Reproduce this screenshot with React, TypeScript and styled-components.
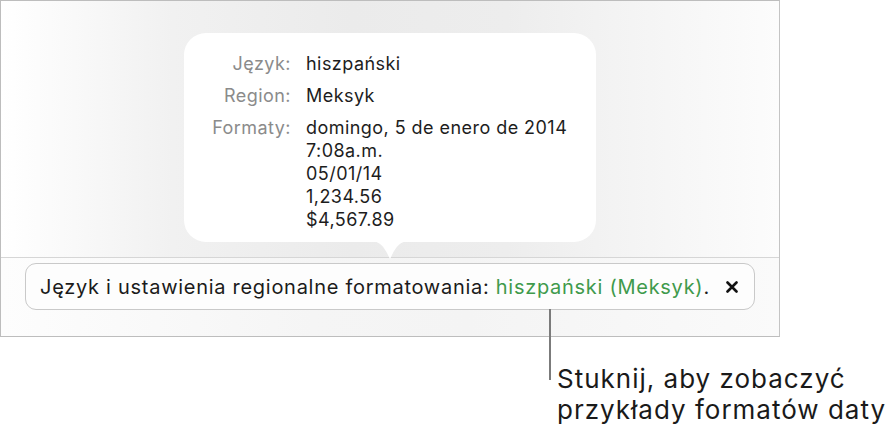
import React from 'react';
import styled, { createGlobalStyle } from 'styled-components';

const GlobalStyle = createGlobalStyle`
  html, body {
    margin: 0;
    padding: 0;
    background: #ffffff;
  }
  body {
    font-family: Inter, "Liberation Sans", Arial, sans-serif;
    -webkit-font-smoothing: antialiased;
  }
`

const Page = styled.div`
  position: relative;
  width: 891px;
  height: 439px;
  overflow: hidden;
`

const Frame = styled.div`
  width: 778px;
  height: 335px;
  border: 1px solid #bdbdbd;
  border-right-color: #c4c4c4;
  display: flex;
  flex-direction: column;
  background: linear-gradient(to right, #ffffff 0%, #f1f1f1 22%, #ebebeb 45%, #ededed 65%, #f7f7f7 88%, #fcfcfc 100%);
`

const Stage = styled.div`
  position: relative;
  height: 256px;
  display: flex;
  justify-content: center;
  padding-top: 32px;
  box-sizing: border-box;
`

const Popover = styled.div`
  position: relative;
  width: 412px;
  height: 209px;
  box-sizing: border-box;
  background: #ffffff;
  border-radius: 22px;
  padding: 19px 0 0 0;
  display: grid;
  grid-template-columns: 107px 1fr;
  column-gap: 15px;
  row-gap: 9px;
  align-content: start;
  font-size: 18px;
  line-height: 23px;
  letter-spacing: 0.45px;
`

const Arrow = styled.svg`
  position: absolute;
  left: 50%;
  bottom: -21px;
  transform: translateX(-50%);
  z-index: 2;
`

const Label = styled.div`
  text-align: right;
  color: #8b8b8b;
`

const Value = styled.div`
  color: #1d1d1d;
`

const Strip = styled.div`
  flex: 1;
  border-top: 1px solid #d6d6d6;
  background: linear-gradient(to right, #fdfdfd 0%, #f5f5f5 40%, #f4f4f4 60%, #fafafa 100%);
  padding: 5px 0 0 24px;
`

const Bar = styled.div`
  width: 730px;
  height: 47px;
  box-sizing: border-box;
  border: 1px solid #c9c9c9;
  border-radius: 11px;
  background: #fdfdfd;
  display: flex;
  align-items: center;
  padding: 0 16px 0 14px;
  font-size: 20px;
  letter-spacing: 0.72px;
  color: #1b1b1b;
  white-space: nowrap;
`

const Highlight = styled.span`
  color: #3f9a4c;
`

const Close = styled.svg`
  margin-left: auto;
  flex: none;
`

const Callout = styled.div`
  position: absolute;
  left: 549px;
  top: 309px;
  display: flex;
  align-items: flex-start;
`

const Leader = styled.div`
  width: 2px;
  height: 71px;
  background: #7b7b7b;
`

const CalloutText = styled.div`
  margin: 54px 0 0 6px;
  font-size: 26px;
  line-height: 31px;
  letter-spacing: 1px;
  color: #1a1a1a;
  white-space: nowrap;
`

const rows: { label: string; values: string[] }[] = [
  { label: 'Język:', values: ['hiszpański'] },
  { label: 'Region:', values: ['Meksyk'] },
  {
    label: 'Formaty:',
    values: ['domingo, 5 de enero de 2014', '7:08a.m.', '05/01/14', '1,234.56', '$4,567.89'],
  },
]

export default function App() {
  return (
    <Page>
      <GlobalStyle />
      <Frame>
        <Stage>
          <Popover>
            {rows.map(r => (
              <React.Fragment key={r.label}>
                <Label>{r.label}</Label>
                <Value>
                  {r.values.map(v => <div key={v}>{v}</div>)}
                </Value>
              </React.Fragment>
            ))}
            <Arrow width="40" height="22" viewBox="0 0 40 22">
              <path d="M0 0 C10 0 14 6 18 14 L20 18 L22 14 C26 6 30 0 40 0 Z" fill="#ffffff" />
            </Arrow>
          </Popover>
        </Stage>
        <Strip>
          <Bar>
            <span>
              Język i ustawienia regionalne formatowania: <Highlight>hiszpański (Meksyk)</Highlight>.
            </span>
            <Close width="12" height="12" viewBox="0 0 12 12">
              <path d="M1.5 1.5 L10.5 10.5 M10.5 1.5 L1.5 10.5" stroke="#111" strokeWidth="2.6" strokeLinecap="round" />
            </Close>
          </Bar>
        </Strip>
      </Frame>
      <Callout>
        <Leader />
        <CalloutText>
          Stuknij, aby zobaczyć
          <br />
          przykłady formatów daty
        </CalloutText>
      </Callout>
    </Page>
  );
}
